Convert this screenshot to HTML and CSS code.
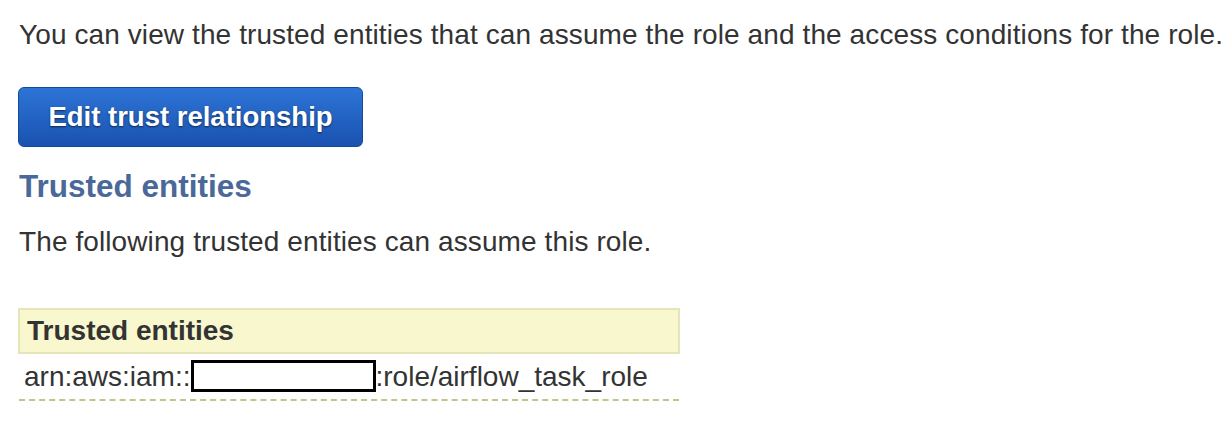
FILE: index.html
```html
<!DOCTYPE html>
<html>
<head>
<meta charset="utf-8">
<link rel="stylesheet" href="styles.css">
</head>
<body>
<div class="page">
  <p class="intro">You can view the trusted entities that can assume the role and the access conditions for the role.</p>
  <button class="btn-primary">Edit trust relationship</button>
  <h2 class="section-title">Trusted entities</h2>
  <p class="desc">The following trusted entities can assume this role.</p>
  <table class="entities">
    <thead>
      <tr><th>Trusted entities</th></tr>
    </thead>
    <tbody>
      <tr><td>arn:aws:iam::<span class="redact"></span>:role/airflow_task_role</td></tr>
    </tbody>
  </table>
</div>
</body>
</html>
```
FILE: styles.css
```css
html, body {
  margin: 0;
  padding: 0;
  background: #ffffff;
}
.page {
  padding: 18px 0 0 18px;
  font-family: "Liberation Sans", Arial, sans-serif;
  color: #333333;
}
.intro {
  margin: 0;
  font-size: 28px;
  letter-spacing: 0.1px;
  line-height: 34px;
  padding-left: 1px;
}
.btn-primary {
  display: block;
  margin-top: 35px;
  width: 345px;
  height: 60px;
  border: 1px solid #134a9c;
  border-radius: 6px;
  background: linear-gradient(#2d74d6, #1a52b0);
  color: #ffffff;
  font-family: "Liberation Sans", Arial, sans-serif;
  font-weight: bold;
  font-size: 27.5px;
  text-shadow: 0 1px 2px rgba(0,0,0,0.6);
  padding: 0;
}
.section-title {
  margin: 22px 0 0 1px;
  font-size: 31.5px;
  line-height: 34px;
  color: #4a6899;
  font-weight: bold;
}
.desc {
  margin: 22px 0 0 1px;
  font-size: 28px;
  letter-spacing: 0.1px;
  line-height: 34px;
}
.entities {
  margin-top: 49px;
  width: 662px;
  border-collapse: collapse;
  font-size: 28px;
}
.entities th {
  text-align: left;
  background: #f9f7cd;
  border: 2px solid #e6e5b8;
  height: 42px;
  padding: 0 0 0 7px;
  font-weight: bold;
  color: #333333;
}
.entities td {
  height: 45px;
  padding: 0 0 0 5px;
  border-bottom: 2px dashed #c0c687;
  white-space: nowrap;
}
.redact {
  display: inline-block;
  width: 179px;
  height: 26px;
  border: 3px solid #000000;
  background: #ffffff;
  vertical-align: middle;
  margin: -4px 0 0 0;
}
```
